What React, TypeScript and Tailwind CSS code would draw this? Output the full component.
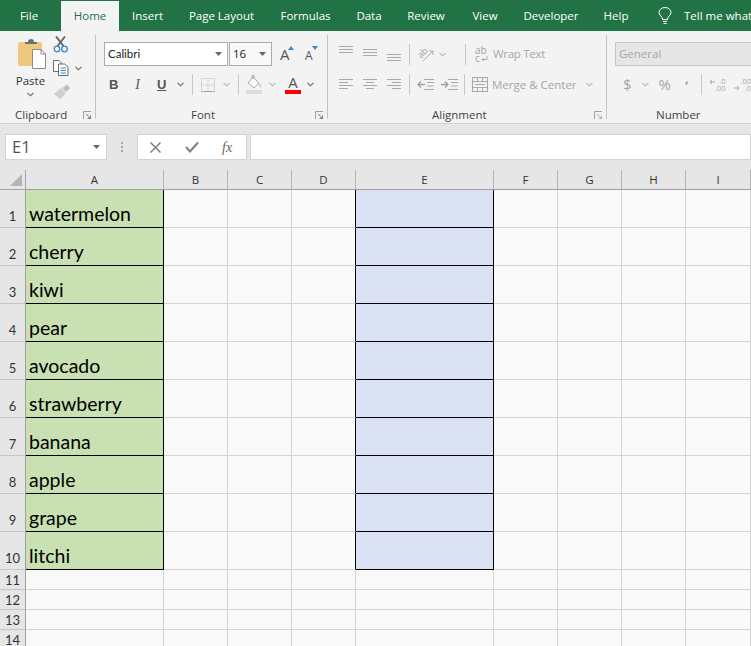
import type { ReactNode } from "react";

const FRUITS = ["watermelon", "cherry", "kiwi", "pear", "avocado", "strawberry", "banana", "apple", "grape", "litchi"];
const COLUMNS = ["A", "B", "C", "D", "E", "F", "G", "H", "I"];
const TABS = [
  { name: "File", w: "w-[58px] mr-[3px]" },
  { name: "Home", w: "w-[58px]" },
  { name: "Insert", w: "w-[57px]" },
  { name: "Page Layout", w: "w-[91px]" },
  { name: "Formulas", w: "w-[77px]" },
  { name: "Data", w: "w-[50px]" },
  { name: "Review", w: "w-[64px]" },
  { name: "View", w: "w-[54px]" },
  { name: "Developer", w: "w-[78px]" },
  { name: "Help", w: "w-[52px]" },
];

// --- small drawings --------------------------------------------------------

function Chevron({ color = "#666666", className = "" }: { color?: string; className?: string }) {
  return (
    <svg width="7" height="5" viewBox="0 0 7 5" className={`shrink-0 ${className}`}>
      <path d="M0.5 0.8 L3.5 3.8 L6.5 0.8" fill="none" stroke={color} strokeWidth="1.1" />
    </svg>
  );
}

function Caret({ className = "" }: { className?: string }) {
  return (
    <svg width="7" height="4" viewBox="0 0 7 4" className={`shrink-0 ${className}`}>
      <path d="M0 0 H7 L3.5 4 Z" fill="#666666" />
    </svg>
  );
}

function Launcher({ color = "#777777" }: { color?: string }) {
  return (
    <svg width="9" height="9" viewBox="0 0 9 9" className="shrink-0">
      <path d="M0.5 8 V0.5 H8" fill="none" stroke="#a0a0a0" />
      <path d="M3 3 L7.5 7.5 M7.5 4.5 V7.5 H4.5" fill="none" stroke={color} />
    </svg>
  );
}

// horizontal text lines used by the alignment buttons
function Lines({ rows, className = "" }: { rows: [number, number, number][]; className?: string }) {
  return (
    <svg width="15" height="15" viewBox="0 0 15 15" className={`shrink-0 ${className}`}>
      {rows.map(([x, y, w], i) => (
        <rect key={i} x={x} y={y} width={w} height="1" fill="#a9a9a9" />
      ))}
    </svg>
  );
}

function Sep({ className = "" }: { className?: string }) {
  return <div className={`w-px h-[21px] bg-[#c8c8c8] shrink-0 ${className}`} />;
}

function GroupLine() {
  return <div className="w-px h-[84px] mt-1 bg-[#c4c4c4] shrink-0" />;
}

function GroupLabel({ children, pad, launcher }: { children: ReactNode; pad: string; launcher?: string }) {
  return (
    <div className={`mt-auto h-[16px] flex items-center text-[#444444] ${pad}`}>
      <span>{children}</span>
      {launcher && (
        <span className="ml-auto mr-[3px] flex">
          <Launcher color={launcher} />
        </span>
      )}
    </div>
  );
}

function Decimals({ top, bottom, arrow }: { top: string; bottom: string; arrow: ReactNode }) {
  return (
    <div className="flex items-center shrink-0">
      {arrow}
      <div className="flex flex-col items-end text-[7.5px] leading-[7px] text-[#a9a9a9]">
        <span>{top}</span>
        <span>{bottom}</span>
      </div>
    </div>
  );
}

// --- ribbon groups ---------------------------------------------------------

function Clipboard() {
  return (
    <div className="w-[95px] flex flex-col shrink-0">
      <div className="flex">
        <div className="ml-[15px] w-[31px] flex flex-col items-center">
          <svg width="30" height="32" viewBox="0 0 30 32" className="mt-[7px]">
            <rect x="2" y="4" width="24" height="24" rx="2" fill="#edc87e" />
            <path d="M9 6 V4 H12 Q12 1 15 1 Q18 1 18 4 H21 V6 Z" fill="#6f6f6f" />
            <path d="M16.5 11.5 H25 L29.5 16 V30.5 H16.5 Z" fill="#ffffff" stroke="#8a8a8a" />
            <path d="M25 11.5 V16 H29.5" fill="none" stroke="#8a8a8a" />
          </svg>
          <span className="mt-[3px] leading-[16px] text-[#333333]">Paste</span>
          <Chevron className="mt-[3px]" />
        </div>
        <div className="ml-[7px] w-[18px] flex flex-col items-start">
          <svg width="16" height="17" viewBox="0 0 16 17" className="mt-[5px]">
            <path d="M3 0.5 L10.5 10 M12 0.5 L4.5 10" stroke="#5f5f5f" strokeWidth="1.8" fill="none" />
            <circle cx="4" cy="13" r="2.8" fill="none" stroke="#3f87c4" strokeWidth="1.3" />
            <circle cx="11.5" cy="13" r="2.8" fill="none" stroke="#3f87c4" strokeWidth="1.3" />
          </svg>
          <svg width="16" height="16" viewBox="0 0 16 16" className="mt-[7px]">
            <path d="M0.5 0.5 H6 L8 2.5 V11.5 H0.5 Z" fill="#fff" stroke="#6b6b6b" />
            <path d="M5.5 4 H11.5 L15 7 V15.5 H5.5 Z" fill="#fff" stroke="#6b6b6b" />
            <path d="M7.5 8 H13 M7.5 10.5 H13 M7.5 13 H13" stroke="#3f87c4" />
          </svg>
          <svg width="18" height="16" viewBox="0 0 18 16" className="mt-[8px]">
            <path d="M1 10 L8 4 L13 9 L7 15.5 Q4 12 1 10 Z" fill="#cfcfcf" />
            <path d="M9.5 4 L14 0.5 L17 4 L13 8 Z" fill="#bdbdbd" />
          </svg>
        </div>
        <Chevron className="ml-[4px] mt-[35px]" />
      </div>
      <GroupLabel pad="pl-[15px]" launcher="#777777">Clipboard</GroupLabel>
    </div>
  );
}

function Font() {
  return (
    <div className="w-[231px] flex flex-col shrink-0">
      <div className="flex items-center mt-[11px] ml-[8px] h-[24px]">
        <div className="w-[124px] h-full bg-white border border-[#ababab] flex items-center px-[3px] font-['Lato',sans-serif] text-[11.5px] text-[#222222]">
          Calibri
          <Caret className="ml-auto mr-[2px]" />
        </div>
        <div className="ml-[1px] w-[43px] h-full bg-[#f8f8f8] border border-[#ababab] flex items-center px-[3px] text-[#222222]">
          16
          <Caret className="ml-auto mr-[2px]" />
        </div>
        <div className="ml-[8px] w-[15px] h-full flex items-start text-[#555555]">
          <span className="text-[15px] leading-[20px] mt-[2px]">A</span>
          <svg width="6" height="4" viewBox="0 0 6 4" className="mt-[4px] -ml-[2px]">
            <path d="M0 4 L3 0 L6 4 Z" fill="#3f87c4" />
          </svg>
        </div>
        <div className="ml-[10px] w-[13px] h-full flex items-start text-[#555555]">
          <span className="text-[12px] leading-[16px] mt-[6px]">A</span>
          <svg width="6" height="4" viewBox="0 0 6 4" className="mt-[4px] -ml-[1px]">
            <path d="M0 0 H6 L3 4 Z" fill="#3f87c4" />
          </svg>
        </div>
      </div>
      <div className="flex items-center mt-[8px] h-[21px] font-['Liberation_Serif',serif] text-[#555555]">
        <span className="ml-[13px] w-[9px] text-center font-['Liberation_Sans',sans-serif] font-bold text-[13px]">B</span>
        <span className="ml-[15px] w-[9px] text-center italic text-[14px]">I</span>
        <span className="ml-[15px] w-[9px] text-center font-['Liberation_Sans',sans-serif] font-bold text-[13px] underline">U</span>
        <Chevron className="ml-[11px]" />
        <Sep className="ml-[8px]" />
        <svg width="14" height="14" viewBox="0 0 14 14" className="ml-[8px]">
          <rect x="0.5" y="0.5" width="13" height="13" fill="none" stroke="#bdbdbd" strokeDasharray="1 1" />
          <path d="M7 0 V14 M0 7 H14" stroke="#bdbdbd" strokeDasharray="1 1" />
          <path d="M0 13.5 H14" stroke="#a9a9a9" />
        </svg>
        <Chevron color="#b5b5b5" className="ml-[8px]" />
        <Sep className="ml-[8px]" />
        <svg width="17" height="19" viewBox="0 0 17 19" className="ml-[7px]">
          <path d="M7 2 L13 8 L8 13 L2 8 Z" fill="#f9f9f9" stroke="#a9a9a9" />
          <path d="M6 4 V0.5 H8 V4" fill="none" stroke="#a9a9a9" />
          <path d="M13.5 8 Q16 11 14.5 12.5 Q13 11 13.5 8 Z" fill="#b5b5b5" />
          <rect x="0" y="15" width="16" height="4" fill="#dcdcdc" />
        </svg>
        <Chevron color="#b5b5b5" className="ml-[6px]" />
        <div className="ml-[9px] w-[16px] flex flex-col items-center">
          <span className="text-[15px] leading-[15px] font-['Open_Sans',sans-serif]">A</span>
          <div className="w-[16px] h-[4px] bg-[#ff0000]" />
        </div>
        <Chevron className="ml-[6px]" />
      </div>
      <GroupLabel pad="pl-[95px]" launcher="#777777">Font</GroupLabel>
    </div>
  );
}

function Alignment() {
  return (
    <div className="w-[278px] flex flex-col shrink-0 text-[#a6a6a6]">
      <div className="flex items-center mt-[11px] h-[24px] ml-[11px]">
        <Lines rows={[[0, 3, 14], [0, 6, 14], [0, 9, 14]]} className="-mt-[8px]" />
        <Lines rows={[[0, 3, 14], [0, 6, 14], [0, 9, 14]]} className="ml-[9px] -mt-[1px]" />
        <Lines rows={[[0, 3, 14], [0, 6, 14], [0, 9, 14]]} className="ml-[9px] mt-[9px]" />
        <Sep className="ml-[7px]" />
        <div className="ml-[7px] w-[18px] h-[16px] flex items-center relative">
          <span className="text-[9px] leading-[9px] -rotate-45 -mt-[3px] text-[#a0a0a0]">ab</span>
          <svg width="18" height="16" viewBox="0 0 18 16" className="absolute left-0 top-0">
            <path d="M6 15 L16 5 M12 5 H16 V9" fill="none" stroke="#a9a9a9" />
          </svg>
        </div>
        <Chevron color="#b5b5b5" className="ml-[4px]" />
        <Sep className="ml-[19px]" />
        <div className="ml-[9px] w-[14px] flex flex-col text-[10px] leading-[8px] text-[#a0a0a0]">
          <span>ab</span>
          <div className="flex items-end">
            <span>c</span>
            <svg width="7" height="6" viewBox="0 0 7 6" className="ml-px">
              <path d="M6 0 V3.5 H1 M2.5 2 L1 3.5 L2.5 5" fill="none" stroke="#a9a9a9" />
            </svg>
          </div>
        </div>
        <span className="ml-[4px] tracking-[-0.3px]">Wrap Text</span>
      </div>
      <div className="flex items-center mt-[8px] h-[21px] ml-[11px]">
        <Lines rows={[[0, 2, 14], [0, 5, 9], [0, 8, 14], [0, 11, 9]]} />
        <Lines rows={[[0, 2, 14], [3, 5, 8], [0, 8, 14], [3, 11, 8]]} className="ml-[9px]" />
        <Lines rows={[[0, 2, 14], [5, 5, 9], [0, 8, 14], [5, 11, 9]]} className="ml-[9px]" />
        <Sep className="ml-[7px]" />
        <svg width="17" height="13" viewBox="0 0 17 13" className="ml-[7px]">
          <path d="M7 1.5 H17 M10 4.5 H17 M10 8 H17 M7 11.5 H17" stroke="#a9a9a9" />
          <path d="M8 6.5 H1 M4 3.5 L1 6.5 L4 9.5" fill="none" stroke="#a0a0a0" strokeWidth="1.3" />
        </svg>
        <svg width="17" height="13" viewBox="0 0 17 13" className="ml-[7px]">
          <path d="M7 1.5 H17 M10 4.5 H17 M10 8 H17 M7 11.5 H17" stroke="#a9a9a9" />
          <path d="M0 6.5 H7 M4 3.5 L7 6.5 L4 9.5" fill="none" stroke="#a0a0a0" strokeWidth="1.3" />
        </svg>
        <Sep className="ml-[6px]" />
        <svg width="16" height="15" viewBox="0 0 16 15" className="ml-[7px]">
          <rect x="0.5" y="0.5" width="15" height="14" fill="none" stroke="#a9a9a9" />
          <path d="M0 4.5 H16 M0 10.5 H16 M5.5 0 V4 M10.5 0 V4 M5.5 11 V15 M10.5 11 V15 M3 7.5 H13" stroke="#a9a9a9" />
        </svg>
        <span className="ml-[4px]">Merge &amp; Center</span>
        <Chevron color="#b5b5b5" className="ml-[9px]" />
      </div>
      <GroupLabel pad="pl-[104px]" launcher="#b0b0b0">
        <span className="text-[#444444]">Alignment</span>
      </GroupLabel>
    </div>
  );
}

function NumberGroup() {
  return (
    <div className="flex-1 flex flex-col min-w-0 text-[#a6a6a6] overflow-hidden">
      <div className="mt-[11px] ml-[8px] h-[24px] w-[150px] bg-[#e6e6e6] border border-[#c6c6c6] flex items-center px-[3px] shrink-0">
        General
      </div>
      <div className="flex items-center mt-[8px] h-[21px]">
        <span className="ml-[16px] w-[9px] text-center text-[15px]">$</span>
        <Chevron color="#b5b5b5" className="ml-[10px]" />
        <span className="ml-[10px] w-[14px] text-center text-[15px]">%</span>
        <span className="ml-[13px] w-[8px] h-[21px] text-center text-[15px] font-bold leading-[6px]">,</span>
        <Sep className="ml-[11px]" />
        <div className="ml-[7px]">
          <Decimals
            top=".0"
            bottom=".00"
            arrow={
              <svg width="6" height="6" viewBox="0 0 6 6" className="-mt-[6px]">
                <path d="M6 3 H1 M3 1 L1 3 L3 5" fill="none" stroke="#a9a9a9" />
              </svg>
            }
          />
        </div>
        <div className="ml-[9px]">
          <Decimals
            top=".00"
            bottom=".0"
            arrow={
              <svg width="6" height="6" viewBox="0 0 6 6" className="mt-[6px]">
                <path d="M0 3 H5 M3 1 L5 3 L3 5" fill="none" stroke="#a9a9a9" />
              </svg>
            }
          />
        </div>
      </div>
      <GroupLabel pad="pl-[49px]">
        <span className="text-[#444444]">Number</span>
      </GroupLabel>
    </div>
  );
}

// --- sheet -----------------------------------------------------------------

function cellClass(col: string, row: number) {
  if (row <= 10 && col === "A") return "bg-[#c8e0b2] border-black";
  if (row <= 10 && col === "E") return "bg-[#d9e1f2] border-black";
  if (row <= 10 && col === "D") return "border-r-black border-b-[#d4d4d4]";
  return "border-[#d4d4d4]";
}

export default function App() {
  const rows = Array.from({ length: 14 }, (_, i) => i + 1);

  return (
    <div className="w-[751px] h-[646px] overflow-hidden bg-[#e6e6e6] font-['Open_Sans',sans-serif] text-[11.5px]">
      <div className="flex items-stretch h-[31px] bg-[#217346] text-white pt-px">
        {TABS.map((t) => (
          <div
            key={t.name}
            className={`${t.w} flex items-center justify-center shrink-0 ${
              t.name === "Home" ? "bg-[#f3f3f3] text-[#217346]" : ""
            }`}
          >
            {t.name}
          </div>
        ))}
        <svg width="14" height="18" viewBox="0 0 14 18" className="ml-[16px] self-center shrink-0">
          <path
            d="M4.5 12.5 Q4.5 10.5 2.5 8.5 Q1 7 1 5.5 A6 5 0 0 1 13 5.5 Q13 7 11.5 8.5 Q9.5 10.5 9.5 12.5 Z"
            fill="none"
            stroke="#ffffff"
          />
          <path d="M5 14.5 H9 M5.5 16.5 H8.5" stroke="#ffffff" />
        </svg>
        <span className="ml-[12px] self-center whitespace-nowrap">Tell me what</span>
      </div>

      <div className="flex h-[93px] bg-[#f3f3f3] border-b border-[#d2d2d2]">
        <Clipboard />
        <GroupLine />
        <Font />
        <GroupLine />
        <Alignment />
        <GroupLine />
        <NumberGroup />
      </div>

      <div className="flex h-[46px] pt-[10px] items-start">
        <div className="ml-[5px] w-[102px] h-[26px] bg-white border border-[#d4d4d4] flex items-center pl-[6px] pr-[6px] text-[16.5px] text-[#555555]">
          E1
          <Caret className="ml-auto" />
        </div>
        <svg width="3" height="11" viewBox="0 0 3 11" className="ml-[14px] mt-[8px]">
          <path d="M0 1 H2 M0 5 H2 M0 9 H2" stroke="#a6a6a6" strokeWidth="2" />
        </svg>
        <div className="ml-[13px] w-[110px] h-[26px] bg-white border border-[#d4d4d4] flex items-center">
          <svg width="11" height="11" viewBox="0 0 11 11" className="ml-[12px]">
            <path d="M0.5 0.5 L10.5 10.5 M10.5 0.5 L0.5 10.5" stroke="#7f7f7f" strokeWidth="1.5" />
          </svg>
          <svg width="14" height="12" viewBox="0 0 14 12" className="ml-[24px]">
            <path d="M1 6 L5 10.5 L13 1.5" fill="none" stroke="#7f7f7f" strokeWidth="2" />
          </svg>
          <span className="ml-[23px] font-['Liberation_Serif',serif] italic text-[14px] text-[#666666]">fx</span>
        </div>
        <div className="ml-[3px] flex-1 h-[26px] bg-white border border-[#d4d4d4]" />
      </div>

      <div className="grid grid-cols-[26px_138px_64px_64px_64px_138px_64px_64px_64px_65px] grid-rows-[20px_repeat(10,38px)_repeat(4,20px)] bg-[#f9f9f9] text-black">
        <div className="bg-[#e6e6e6] border-r border-b border-[#a5a5a5] flex items-end justify-end pr-[3px] pb-[3px]">
          <svg width="12" height="12" viewBox="0 0 12 12">
            <path d="M12 0 V12 H0 Z" fill="#b4b4b4" />
          </svg>
        </div>
        {COLUMNS.map((c) => (
          <div
            key={c}
            className="bg-[#e6e6e6] border-r border-r-[#b5b5b5] border-b border-b-[#9f9f9f] flex items-center justify-center text-[#333333]"
          >
            {c}
          </div>
        ))}
        {rows.map((r) => (
          <div key={r} className="contents">
            <div
              className={`bg-[#e6e6e6] border-r border-r-[#9f9f9f] border-b border-b-[#c6c6c6] flex items-end justify-center text-[13px] leading-[18px] text-[#333333] font-['Lato',sans-serif] ${
                r <= 10 ? "pb-[2px]" : ""
              }`}
            >
              {r}
            </div>
            {COLUMNS.map((c) => (
              <div
                key={c}
                className={`border-r border-b flex items-end pl-[3px] pb-[1px] font-['Lato',sans-serif] text-[19.5px] leading-[25px] whitespace-nowrap ${cellClass(c, r)}`}
              >
                {c === "A" && r <= 10 ? FRUITS[r - 1] : ""}
              </div>
            ))}
          </div>
        ))}
      </div>
    </div>
  );
}
